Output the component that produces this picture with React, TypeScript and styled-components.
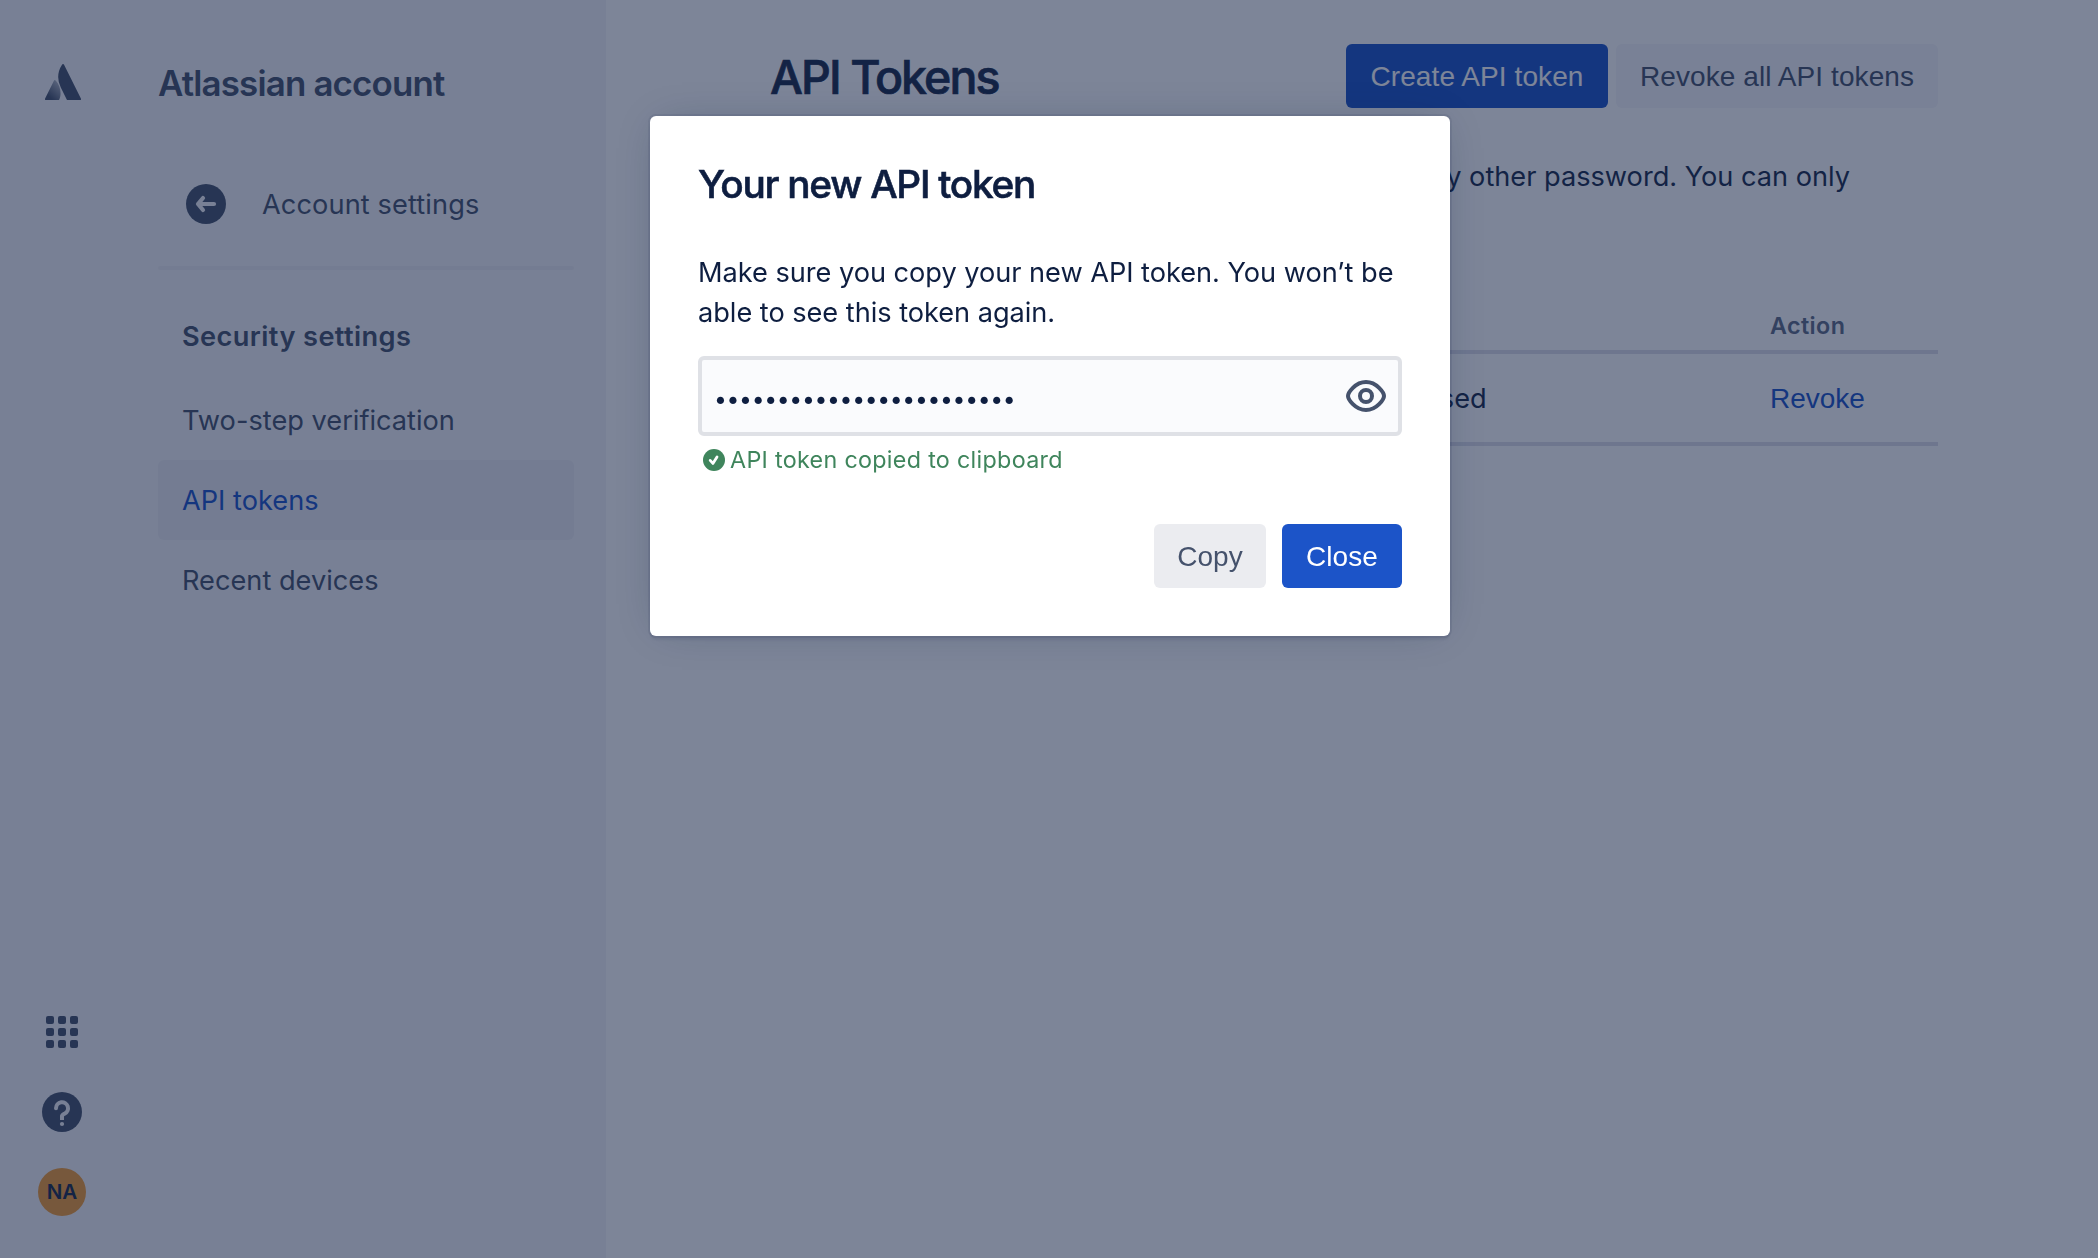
import React from "react";
import styled, { createGlobalStyle } from "styled-components";

const GlobalStyle = createGlobalStyle`
  * { box-sizing: border-box; }
  body {
    margin: 0;
    background: #ffffff;
    color: #192b4b;
    font-family: Inter, "Liberation Sans", sans-serif;
    font-size: 27.2px;
    line-height: 40px;
  }
  h1, h2, h3, p { margin: 0; }
`;

const Page = styled.div`
  display: flex;
  height: 1258px;
  overflow: hidden;
`;

const Sidebar = styled.aside`
  display: flex;
  flex: none;
  width: 606px;
  background: #f4f5f8;
  color: #45526c;
`;

const Rail = styled.div`
  display: flex;
  flex-direction: column;
  justify-content: space-between;
  align-items: center;
  width: 124px;
  padding: 64px 0 42px;
  svg { display: block; }
`;

const LogoLink = styled.div`
  padding-left: 2px;
`;

const RailActions = styled.div`
  display: flex;
  flex-direction: column;
  align-items: center;
`;

const HelpSlot = styled.div`
  margin: 44px 0 36px;
`;

const Avatar = styled.div`
  display: grid;
  place-items: center;
  width: 48px;
  height: 48px;
  border-radius: 50%;
  background: #f19d38;
  color: #192b4b;
  font-size: 20.6px;
  font-weight: 600;
  line-height: 32px;
`;

const Menu = styled.nav`
  width: 416px;
  margin-left: 34px;
  padding-top: 63px;
`;

const MenuTitle = styled.h2`
  font-size: 34.9px;
  font-weight: 600;
  line-height: 40px;
  letter-spacing: -0.83px;
  white-space: nowrap;
`;

const BackLink = styled.div`
  display: flex;
  align-items: center;
  gap: 36px;
  height: 40px;
  margin: 81px 0 42px;
  padding-left: 28px;
  svg { display: block; }
`;

const BackLabel = styled.span`
  padding-top: 2px;
  letter-spacing: 0.1px;
`;

const Divider = styled.hr`
  height: 4px;
  margin: 0;
  border: 0;
  border-radius: 2px;
  background: #ebecf1;
`;

const MenuHeading = styled.h3`
  margin: 47px 0 23px;
  padding-left: 24px;
  font-size: 27.2px;
  font-weight: 600;
  letter-spacing: 0.4px;
`;

const MenuItem = styled.div<{ $selected?: boolean }>`
  padding: 21px 24px 19px;
  border-radius: 6px;
  background: ${(p) => (p.$selected ? "#ebecf1" : "transparent")};
  color: ${(p) => (p.$selected ? "#1c54c8" : "inherit")};
`;

const Main = styled.main`
  width: 1332px;
  padding: 44px 0 0 164px;
`;

const Header = styled.header`
  display: flex;
  justify-content: space-between;
  align-items: center;
  height: 64px;
`;

const PageTitle = styled.h1`
  padding-top: 2px;
  font-size: 46.5px;
  font-weight: 500;
  line-height: 56px;
  letter-spacing: -1.93px;
  -webkit-text-stroke: 0.7px currentColor;
`;

const ButtonRow = styled.div<{ $gap: number }>`
  display: flex;
  justify-content: flex-end;
  gap: ${(p) => p.$gap}px;
`;

const Button = styled.button<{ $tone: "primary" | "default" | "subtle"; $width: number }>`
  width: ${(p) => p.$width}px;
  height: 64px;
  padding: 2px 0 0;
  border: 0;
  border-radius: 6px;
  background: ${(p) =>
    ({ primary: "#1c54c8", default: "#ebecf0", subtle: "#f6f6fa" })[p.$tone]};
  color: ${(p) => (p.$tone === "primary" ? "#ffffff" : "#45526c")};
  font: 28px/40px "Liberation Sans", Arial, sans-serif;
  letter-spacing: 0.08px;
  white-space: nowrap;
`;

const Intro = styled.p`
  min-height: 80px;
  margin-top: 49px;
  padding-right: 80px;
  letter-spacing: -0.015px;
`;

const Row = styled.div`
  display: grid;
  grid-template-columns: 509px 491px 1fr;
  align-items: center;
  height: 92px;
  padding-top: 2px;
  border-bottom: 4px solid #dedfea;
`;

const HeadRow = styled(Row)`
  height: 45px;
  margin-top: 72px;
  padding: 0 0 7px;
  color: #5f6c86;
  font-size: 23.3px;
  font-weight: 600;
  line-height: 32px;
  letter-spacing: 0.4px;
`;

const ActionCell = styled.span`
  grid-column: 3;
`;

const RevokeLink = styled.a`
  color: #1c54c8;
  font: 28px/40px "Liberation Sans", Arial, sans-serif;
`;

const Scrim = styled.div`
  position: fixed;
  inset: 0;
  display: flex;
  justify-content: center;
  align-items: flex-start;
  padding: 116px 0 0 2px;
  background: rgba(14, 30, 64, 0.54);
`;

const Modal = styled.section`
  display: flex;
  flex-direction: column;
  width: 800px;
  height: 520px;
  padding: 44px 48px 48px;
  border-radius: 6px;
  background: #ffffff;
  box-shadow:
    0 0 0 2px rgba(9, 30, 66, 0.08),
    0 4px 2px rgba(9, 30, 66, 0.08),
    0 0 40px -12px rgba(9, 30, 66, 0.31);
  color: #0e1e40;
`;

const ModalTitle = styled.h2`
  margin-bottom: 45px;
  font-size: 38.8px;
  font-weight: 500;
  line-height: 48px;
  letter-spacing: -1.29px;
  -webkit-text-stroke: 0.6px currentColor;
`;

const ModalText = styled.p`
  letter-spacing: -0.04px;
`;

const TokenField = styled.div`
  display: flex;
  justify-content: space-between;
  align-items: center;
  height: 80px;
  margin-top: 23px;
  padding: 0 12px;
  border: 4px solid #dfe1e6;
  border-radius: 6px;
  background: #fafbfd;
  svg { display: block; }
`;

const MaskedToken = styled.span`
  padding-top: 6px;
  font-size: 23px;
  letter-spacing: -0.38px;
`;

const Confirmation = styled.div`
  display: flex;
  align-items: center;
  gap: 5px;
  height: 32px;
  margin: 8px 0 48px;
  padding-left: 5px;
  color: #3f855c;
  font-size: 23.3px;
  line-height: 32px;
  letter-spacing: 0.31px;
`;

const Logo = () => (
  <svg width="36" height="36" viewBox="0 0 24 24" fill="#45526c">
    <defs>
      <linearGradient id="fold" x1="0.85" y1="0.1" x2="0.3" y2="0.85">
        <stop offset="0" stopColor="#45526c" stopOpacity="0.4" />
        <stop offset="1" stopColor="#45526c" />
      </linearGradient>
    </defs>
    <path
      fill="url(#fold)"
      d="M7.12 11.084a.683.683 0 00-1.16.126L.075 22.974a.703.703 0 00.63 1.018h8.19a.678.678 0 00.63-.39c1.767-3.65.696-9.203-2.406-12.52z"
    />
    <path d="M11.434.386a15.515 15.515 0 00-.906 15.317l3.95 7.9a.703.703 0 00.628.388h8.19a.703.703 0 00.63-1.017L12.63.38a.664.664 0 00-1.196.006z" />
  </svg>
);

const BackIcon = () => (
  <svg width="40" height="40" viewBox="0 0 40 40" fill="none">
    <circle cx="20" cy="20" r="20" fill="#45526c" />
    <path d="M17 14 12 20l5 6M12 20h16" stroke="#f4f5f8" strokeWidth="4.2" strokeLinecap="round" strokeLinejoin="round" />
  </svg>
);

const GridIcon = () => (
  <svg width="32" height="32" viewBox="0 0 32 32" fill="#45526c">
    {[0, 12, 24].map((y) =>
      [0, 12, 24].map((x) => <rect key={`${x}-${y}`} x={x} y={y} width="8" height="8" rx="2" />)
    )}
  </svg>
);

const HelpIcon = () => (
  <svg width="40" height="40" viewBox="0 0 40 40" fill="none">
    <circle cx="20" cy="20" r="20" fill="#45526c" />
    <path d="M14 16.2a6 6 0 1 1 8.6 5.4C20.8 22.4 20 23 20 24.6" stroke="#f4f5f8" strokeWidth="4" strokeLinecap="round" />
    <path d="M18 23.5h4V28h-4z" fill="#f4f5f8" />
    <circle cx="20" cy="32" r="2.1" fill="#f4f5f8" />
  </svg>
);

const EyeIcon = () => (
  <svg width="40" height="32" viewBox="0 0 40 32" fill="none" stroke="#45526c" strokeWidth="4">
    <path d="M2 16C2 13 9 2 20 2s18 11 18 14-7 14-18 14S2 19 2 16z" />
    <circle cx="20" cy="16" r="6" />
  </svg>
);

const CheckIcon = () => (
  <svg width="22" height="22" viewBox="0 0 22 22" fill="none">
    <circle cx="11" cy="11" r="11" fill="#3f855c" />
    <path d="M7.2 11.4l2.7 3L14 8" stroke="#fff" strokeWidth="2.8" strokeLinecap="round" strokeLinejoin="round" />
  </svg>
);

export default function App() {
  return (
    <>
      <GlobalStyle />
      <Page>
        <Sidebar>
          <Rail>
            <LogoLink><Logo /></LogoLink>
            <RailActions>
              <GridIcon />
              <HelpSlot><HelpIcon /></HelpSlot>
              <Avatar>NA</Avatar>
            </RailActions>
          </Rail>
          <Menu>
            <MenuTitle>Atlassian account</MenuTitle>
            <BackLink><BackIcon /><BackLabel>Account settings</BackLabel></BackLink>
            <Divider />
            <MenuHeading>Security settings</MenuHeading>
            <MenuItem>Two-step verification</MenuItem>
            <MenuItem $selected>API tokens</MenuItem>
            <MenuItem>Recent devices</MenuItem>
          </Menu>
        </Sidebar>
        <Main>
          <Header>
            <PageTitle>API Tokens</PageTitle>
            <ButtonRow $gap={8}>
              <Button $tone="primary" $width={262}>Create API token</Button>
              <Button $tone="subtle" $width={322}>Revoke all API tokens</Button>
            </ButtonRow>
          </Header>
          <Intro>
            Your API tokens need to be treated as securely as any other password. You can only
          </Intro>
          <HeadRow>
            <ActionCell>Action</ActionCell>
          </HeadRow>
          <Row>
            <span />
            <span>Never accessed</span>
            <RevokeLink>Revoke</RevokeLink>
          </Row>
        </Main>
      </Page>
      <Scrim>
        <Modal>
          <ModalTitle>Your new API token</ModalTitle>
          <ModalText>
            Make sure you copy your new API token. You won’t be able to see this token again.
          </ModalText>
          <TokenField>
            <MaskedToken>{"•".repeat(24)}</MaskedToken>
            <EyeIcon />
          </TokenField>
          <Confirmation><CheckIcon />API token copied to clipboard</Confirmation>
          <ButtonRow $gap={16}>
            <Button $tone="default" $width={112}>Copy</Button>
            <Button $tone="primary" $width={120}>Close</Button>
          </ButtonRow>
        </Modal>
      </Scrim>
    </>
  );
}
